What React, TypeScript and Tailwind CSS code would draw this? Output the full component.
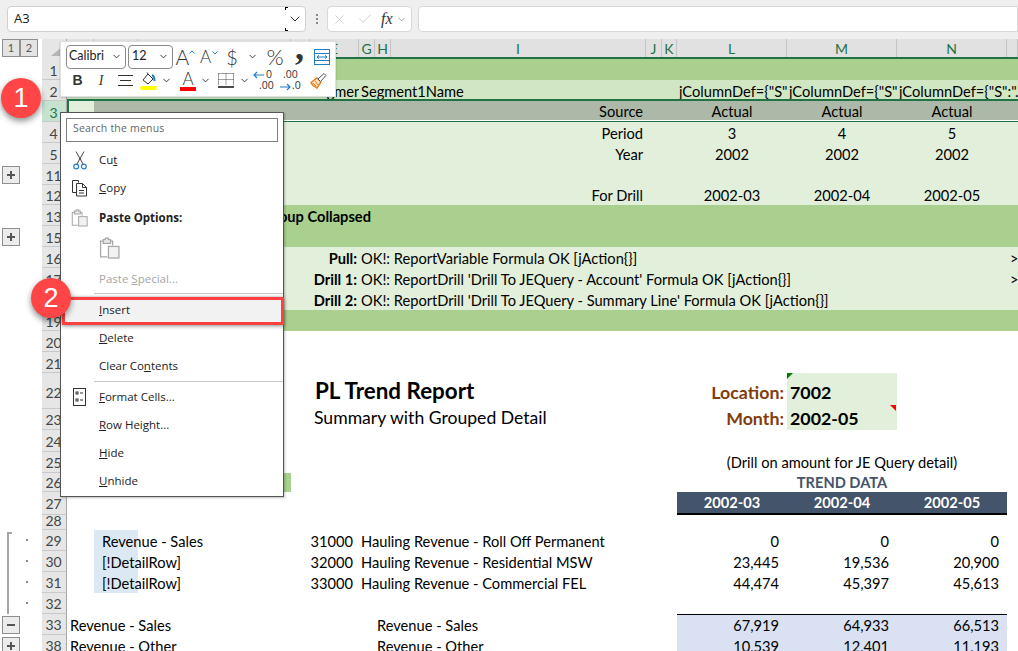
import React from "react";
import { ChevronDown, X, Check } from "lucide-react";

const gridCols =
  "grid grid-cols-[27px_44px_153px_19px_49px_16px_16px_255px_16px_15px_110px_110px_110px_11px] grid-rows-1 items-center h-full flex-1 min-w-0";

function OutlineBtn({ children }: { children: React.ReactNode }) {
  return (
    <div className="w-[18px] h-[18px] border border-[#8f8f8f] bg-[#ececec] flex items-center justify-center text-[#555] text-[13px] font-bold leading-none ml-[2px]">
      {children}
    </div>
  );
}

function PlusIcon() {
  return (
    <svg width="10" height="10" viewBox="0 0 10 10">
      <path d="M1 5h8M5 1v8" stroke="#555" strokeWidth="2" />
    </svg>
  );
}

function MinusIcon() {
  return (
    <svg width="10" height="10" viewBox="0 0 10 10">
      <path d="M1 5h8" stroke="#555" strokeWidth="2" />
    </svg>
  );
}

function Row({
  n,
  h,
  gutter,
  head,
  lh = "",
  children,
}: {
  n: string;
  h: string;
  gutter?: React.ReactNode;
  head?: string;
  lh?: string;
  children?: React.ReactNode;
}) {
  return (
    <div className={`flex relative ${h}`}>
      <div className="w-[42px] shrink-0 relative flex items-center">{gutter}</div>
      <div
        className={`w-[25px] shrink-0 border-b border-r border-b-[#c9c9c9] border-r-[#a8a8a8] flex items-center justify-center text-[14px] pr-[1px] ${lh} ${
          head ?? "bg-[#e6e6e6] text-[#444]"
        }`}
      >
        {n}
      </div>
      <div className={gridCols}>{children}</div>
    </div>
  );
}

function Dot() {
  return <div className="absolute left-[26px] top-[9px] w-[2px] h-[2px] bg-[#888]" />;
}

const fill = "row-start-1 h-full flex items-center whitespace-nowrap";
const low = "row-start-1 h-full flex items-center whitespace-nowrap pt-[2px]";

function MenuItem({ children, icon, h = "h-[28px]", cls = "" }: { children: React.ReactNode; icon?: React.ReactNode; h?: string; cls?: string }) {
  return (
    <div className={`flex items-center ${h} ${cls}`}>
      <div className="w-[38px] shrink-0 flex justify-center pr-[1px]">{icon}</div>
      <div className="whitespace-nowrap">{children}</div>
    </div>
  );
}

function ScissorsIcon() {
  return (
    <svg width="14" height="19" viewBox="0 0 14 19" fill="none">
      <path d="M3 0.5L10 13M11 0.5L4 13" stroke="#444" strokeWidth="1" />
      <circle cx="3.2" cy="15.5" r="2.4" stroke="#2b7cd3" strokeWidth="1.2" />
      <circle cx="10.8" cy="15.5" r="2.4" stroke="#2b7cd3" strokeWidth="1.2" />
    </svg>
  );
}

function CopyIcon() {
  return (
    <svg width="18" height="18" viewBox="0 0 18 18" fill="none" stroke="#333" strokeWidth="1">
      <path d="M7.5 3.5V1.5H1.5V13.5H5" />
      <path d="M5.5 4.5H11.5L15.5 8.5V17H5.5Z" fill="#fff" />
      <path d="M11.5 4.5V8.5H15.5M8 11.5h5M8 14h5" />
    </svg>
  );
}

function PasteIcon({ size = 18 }: { size?: number }) {
  return (
    <svg width={size} height={size * 1.05} viewBox="0 0 20 21" fill="none" stroke="#a8a8a8" strokeWidth="1.2">
      <path d="M8 19H1.5V4H13V8" />
      <path d="M4 4V2.5H6V1H9V2.5H11V6H4Z" fill="#e8e8e8" />
      <rect x="9" y="9" width="10" height="11" fill="#f2f2f2" />
    </svg>
  );
}

function FormatCellsIcon() {
  return (
    <svg width="13" height="18" viewBox="0 0 13 18" fill="none" stroke="#333" strokeWidth="1">
      <rect x="0.5" y="0.5" width="12" height="17" />
      <rect x="3" y="4" width="2" height="2" />
      <rect x="3" y="11" width="2" height="2" />
      <path d="M7 5h3M7 12h3" />
    </svg>
  );
}

function Caret({ className = "" }: { className?: string }) {
  return <ChevronDown size={11} strokeWidth={2} color="#333" className={className} />;
}

function Toolbar() {
  const btn = "flex items-center justify-center shrink-0 h-[24px]";
  return (
    <div className="absolute left-[60px] top-[41px] w-[276px] h-[56px] bg-white border border-[#e0e0e0] shadow-[0_1px_2px_rgba(0,0,0,0.2)] font-['Open_Sans',sans-serif] text-[#333] z-10">
      <div className="flex items-center pl-[5px] pt-[3px] h-[26px]">
        <div className="w-[60px] h-[24px] border border-[#8a8a8a] rounded-[4px] flex items-center justify-between pl-[2px] pr-[3px] text-[12.5px] font-['Lato',sans-serif] text-[#222]">
          Calibri
          <Caret />
        </div>
        <div className="w-[45px] h-[24px] border border-[#8a8a8a] rounded-[4px] ml-[2px] flex items-center justify-between pl-[3px] pr-[3px] text-[12.5px] font-['Lato',sans-serif] text-[#222]">
          12
          <Caret />
        </div>
        <div className={`${btn} w-[23px] text-[21px] font-light font-['Lato',sans-serif] relative pr-[4px]`}>
          A
          <svg width="6" height="4" viewBox="0 0 6 4" className="absolute right-[1px] top-[5px]">
            <path d="M0.5 3.5L3 1L5.5 3.5" stroke="#2a8fd8" fill="none" strokeWidth="1" />
          </svg>
        </div>
        <div className={`${btn} w-[24px] text-[17px] font-light font-['Lato',sans-serif] relative pr-[5px]`}>
          A
          <svg width="6" height="4" viewBox="0 0 6 4" className="absolute right-[2px] top-[6px]">
            <path d="M0.5 0.5L3 3L5.5 0.5" stroke="#2a8fd8" fill="none" strokeWidth="1" />
          </svg>
        </div>
        <div className={`${btn} w-[24px] text-[20px] font-light font-['Lato',sans-serif]`}>$</div>
        <div className={`${btn} w-[16px]`}>
          <Caret />
        </div>
        <div className={`${btn} w-[30px] text-[22px] font-light font-['Lato',sans-serif]`}>%</div>
        <div className={`${btn} w-[19px] text-[36px] font-bold font-['Liberation_Serif',serif] pb-[20px]`}>,</div>
        <div className={`${btn} w-[26px]`}>
          <svg width="16" height="16" viewBox="0 0 16 16" fill="none">
            <rect x="0.5" y="0.5" width="15" height="15" stroke="#1f7fc4" fill="#fff" />
            <path d="M0.5 4.5H15.5M0.5 11.5H15.5" stroke="#1f7fc4" />
            <path d="M3 8H13M3 8L5 6.3M3 8L5 9.7M13 8L11 6.3M13 8L11 9.7" stroke="#1f7fc4" />
          </svg>
        </div>
      </div>
      <div className="flex items-center pl-[5px] h-[24px]">
        <div className={`${btn} w-[23px] text-[14px] font-bold font-['Liberation_Sans',sans-serif]`}>B</div>
        <div className={`${btn} w-[24px] text-[14px] italic font-['Liberation_Serif',serif]`}>I</div>
        <div className={`${btn} w-[24px]`}>
          <svg width="15" height="13" viewBox="0 0 15 13" stroke="#333">
            <path d="M0 1.5H15M2 6.5H13M0 11.5H15" />
          </svg>
        </div>
        <div className={`${btn} w-[22px]`}>
          <svg width="17" height="19" viewBox="0 0 17 19" fill="none">
            <path d="M3 9L8 3L13 8L8 13Z" stroke="#333" fill="#fff" />
            <path d="M7 1.5L8 3" stroke="#333" />
            <path d="M12 4C14 5 14.5 8 14.5 10" stroke="#1f7fc4" strokeWidth="2" />
            <rect x="0.5" y="15" width="16" height="4" fill="#ffff00" />
          </svg>
        </div>
        <div className={`${btn} w-[14px]`}>
          <Caret />
        </div>
        <div className={`${btn} w-[20px] ml-[5px] flex-col relative`}>
          <span className="text-[17px] font-light font-['Lato',sans-serif] leading-[17px]">A</span>
          <div className="w-[16px] h-[4px] bg-[#ff0000]" />
        </div>
        <div className={`${btn} w-[14px]`}>
          <Caret />
        </div>
        <div className={`${btn} w-[24px] ml-[2px]`}>
          <svg width="16" height="17" viewBox="0 0 16 17" fill="none">
            <path d="M0.5 1.5H15.5M0.5 1.5V13M15.5 1.5V13M8 1.5V13M0.5 7.5H15.5" stroke="#444" strokeDasharray="1 1" />
            <path d="M0 15H16" stroke="#111" strokeWidth="1.5" />
          </svg>
        </div>
        <div className={`${btn} w-[12px]`}>
          <Caret />
        </div>
        <div className={`${btn} w-[30px] relative text-[10.5px] leading-[9px] font-['Open_Sans',sans-serif]`}>
          <svg width="11" height="8" viewBox="0 0 11 8" className="absolute left-[3px] top-[3px]" fill="none" stroke="#1f7fc4" strokeWidth="1.2">
            <path d="M11 4H1M4 1L1 4L4 7" />
          </svg>
          <span className="absolute left-[16px] top-[2px]">0</span>
          <span className="absolute left-[9px] top-[13px]">.00</span>
        </div>
        <div className={`${btn} w-[24px] relative text-[10.5px] leading-[9px] font-['Open_Sans',sans-serif]`}>
          <span className="absolute left-[3px] top-[2px]">.00</span>
          <svg width="11" height="8" viewBox="0 0 11 8" className="absolute left-[0px] top-[15px]" fill="none" stroke="#1f7fc4" strokeWidth="1.2">
            <path d="M0 4H10M7 1L10 4L7 7" />
          </svg>
          <span className="absolute left-[12px] top-[13px]">.0</span>
        </div>
        <div className={`${btn} w-[24px] ml-[2px]`}>
          <svg width="17" height="17" viewBox="0 0 17 17" fill="none">
            <path d="M7 6L11 10L7 16C5 15 2 13 1 10.5Z" fill="#fbe3c2" stroke="#e8811f" strokeWidth="1.4" />
            <path d="M3 11L6 14M5 9L8 13" stroke="#e8811f" />
            <path d="M8 7L14 1.5L16 3.5L10.5 9.5Z" fill="#fff" stroke="#555" />
          </svg>
        </div>
      </div>
    </div>
  );
}

function ContextMenu() {
  return (
    <div className="absolute left-[60px] top-[112px] w-[224px] h-[385px] bg-white border border-[#555] shadow-[1px_1px_2px_rgba(0,0,0,0.25)] z-10 font-['Open_Sans',sans-serif] text-[11.5px] text-[#222]">
      <div className="mx-[5px] mt-[5px] h-[24px] border border-[#808080] flex items-center pl-[6px] pb-[2px] text-[#666] text-[10.5px] tracking-[0.2px]">
        Search the menus
      </div>
      <div className="pt-[4px]">
        <MenuItem icon={<ScissorsIcon />}>
          Cu<u>t</u>
        </MenuItem>
        <MenuItem icon={<CopyIcon />}>
          <u>C</u>opy
        </MenuItem>
        <MenuItem cls="mt-[2px]" icon={<PasteIcon size={17} />}>
          <span className="font-bold">Paste Options:</span>
        </MenuItem>
        <div className="h-[33px] pl-[38px] flex items-center">
          <PasteIcon size={21} />
        </div>
        <MenuItem cls="text-[#a6a6a6]">
          Paste <u>S</u>pecial...
        </MenuItem>
        <div className="ml-[33px] h-[1px] bg-[#c8c8c8]" />
        <MenuItem cls="bg-[#f2f2f2] mt-[2px]">
          <u>I</u>nsert
        </MenuItem>
        <MenuItem>
          <u>D</u>elete
        </MenuItem>
        <MenuItem>
          Clear Co<u>n</u>tents
        </MenuItem>
        <div className="ml-[33px] h-[1px] bg-[#c8c8c8] mt-[1px] mb-[1px]" />
        <MenuItem icon={<FormatCellsIcon />}>
          <u>F</u>ormat Cells...
        </MenuItem>
        <MenuItem>
          <u>R</u>ow Height...
        </MenuItem>
        <MenuItem>
          <u>H</u>ide
        </MenuItem>
        <MenuItem>
          <u>U</u>nhide
        </MenuItem>
      </div>
    </div>
  );
}

function Badge({ pos, children }: { pos: string; children: React.ReactNode }) {
  return (
    <div
      className={`absolute ${pos} w-[40px] h-[40px] rounded-full bg-[#ff4545] text-white text-[27px] font-['Liberation_Sans',sans-serif] flex items-center justify-center shadow-[0_3px_6px_rgba(0,0,0,0.45)] z-30`}
    >
      {children}
    </div>
  );
}

const headers: [string, string][] = [
  ["A", "col-[1/2]"],
  ["B", "col-[2/3]"],
  ["C", "col-[3/4]"],
  ["D", "col-[4/5]"],
  ["E", "col-[5/6]"],
  ["G", "col-[6/7]"],
  ["H", "col-[7/8]"],
  ["I", "col-[8/9]"],
  ["J", "col-[9/10]"],
  ["K", "col-[10/11]"],
  ["L", "col-[11/12]"],
  ["M", "col-[12/13]"],
  ["N", "col-[13/14]"],
  ["", "col-[14/15]"],
];

function Amounts({ a, b, c }: { a: string; b: string; c: string }) {
  return (
    <>
      <div className={`${low} col-[11/12] justify-end pr-[8px]`}>{a}</div>
      <div className={`${low} col-[12/13] justify-end pr-[8px]`}>{b}</div>
      <div className={`${low} col-[13/14] justify-end pr-[8px]`}>{c}</div>
    </>
  );
}

function Three({ a, b, c, cls = "" }: { a: string; b: string; c: string; cls?: string }) {
  return (
    <>
      <div className={`${fill} col-[11/12] justify-center ${cls}`}>{a}</div>
      <div className={`${fill} col-[12/13] justify-center ${cls}`}>{b}</div>
      <div className={`${fill} col-[13/14] justify-center ${cls}`}>{c}</div>
    </>
  );
}

export default function App() {
  return (
    <div className="w-[1018px] h-[651px] relative overflow-hidden bg-white font-['Lato',sans-serif] text-[14.65px] text-black">
      {/* formula bar */}
      <div className="h-[39px] bg-[#efefef] flex items-center pl-[7px] pb-[1px]">
        <div className="w-[299px] h-[26px] bg-white border border-[#d0d0d0] rounded-[4px] flex items-center justify-between pl-[6px] text-[13px] text-[#222] font-['Open_Sans',sans-serif]">
          A3
          <div className="w-[20px] h-full flex items-center justify-center relative">
            <ChevronDown size={16} strokeWidth={1.5} color="#333" />
            <div className="absolute left-0 top-0 w-[3px] h-[3px] border-t border-l border-black" />
            <div className="absolute left-0 bottom-0 w-[3px] h-[3px] border-b border-l border-black" />
          </div>
        </div>
        <div className="w-[21px] flex flex-col items-center gap-[2px]">
          <div className="w-[2px] h-[2px] bg-[#888]" />
          <div className="w-[2px] h-[2px] bg-[#888]" />
          <div className="w-[2px] h-[2px] bg-[#888]" />
        </div>
        <div className="w-[85px] h-[26px] bg-white border border-[#d8d8d8] rounded-[4px] flex items-center pl-[4px]">
          <X size={15} strokeWidth={1.2} color="#bdbdbd" />
          <Check size={16} strokeWidth={1.2} color="#bdbdbd" className="ml-[10px]" />
          <span className="ml-[8px] text-[16px] italic font-['Liberation_Serif',serif] text-[#333]">fx</span>
          <ChevronDown size={11} strokeWidth={1.2} color="#555" className="ml-[3px]" />
        </div>
        <div className="ml-[6px] flex-1 h-[26px] bg-white border border-[#d8d8d8] rounded-l-[4px]" />
      </div>

      {/* column headers */}
      <div className="flex h-[20px]">
        <div className="w-[42px] shrink-0 flex items-start">
          <div className="w-[18px] h-[18px] border border-[#8f8f8f] bg-[#e4e4e4] ml-[2px] flex items-center justify-center text-[11px] text-[#555]">1</div>
          <div className="w-[18px] h-[18px] border border-[#8f8f8f] bg-[#e4e4e4] flex items-center justify-center text-[11px] text-[#555]">2</div>
        </div>
        <div className="w-[25px] shrink-0 bg-[#e6e6e6] border-r border-[#a8a8a8] relative">
          <svg width="12" height="10" viewBox="0 0 12 10" className="absolute left-[9px] top-[7px]">
            <path d="M12 0V10H0Z" fill="#b5b5b5" />
          </svg>
        </div>
        <div className={`${gridCols} bg-[#e1e1e1] border-b-2 border-[#217346]`}>
          {headers.map(([t, c]) => (
            <div key={c} className={`${c} row-start-1 h-full flex items-center justify-center border-r border-[#c4c4c4] text-[#217346] text-[14px]`}>
              {t}
            </div>
          ))}
        </div>
      </div>

      <Row n="1" h="h-[21px]" lh="pt-[2px]">
        <div className="col-[1/15] row-start-1 h-full bg-[#a9d08e]" />
      </Row>
      <Row n="2" h="h-[21px]" lh="pt-[2px]">
        <div className="col-[1/15] row-start-1 h-full bg-[#d1e6c3]" />
        <div className={`${low} col-[5/6] overflow-hidden pl-[1px]`}>Segment1Name</div>
        <div className={`${low} col-[6/9] pl-[2px]`}>Segment1Name</div>
        <div className={`${low} col-[11/12] overflow-hidden pl-[2px]`}>jColumnDef={'{"S":"'}</div>
        <div className={`${low} col-[12/13] overflow-hidden pl-[2px]`}>jColumnDef={'{"S":"'}</div>
        <div className={`${low} col-[13/15] overflow-hidden pl-[2px]`}>jColumnDef={'{"S":".'}</div>
      </Row>
      <Row n="3" h="h-[21px]" lh="pt-[2px]" head="bg-[#c5e3cf] text-[#217346]">
        <div className="col-[1/2] row-start-1 h-full bg-[#e2efda]" />
        <div className="col-[2/15] row-start-1 h-full bg-[#adb9a8]" />
        <div className={`${fill} col-[8/9] justify-end pr-[3px]`}>Source</div>
        <Three a="Actual" b="Actual" c="Actual" />
        <div className="absolute left-[67px] right-0 top-[-2px] bottom-[-1px] border-y-2 border-l-2 border-[#217346] pointer-events-none">
          <div className="absolute left-0 right-0 bottom-0 h-[1px] bg-white" />
        </div>
      </Row>
      <Row n="4" h="h-[21px]" lh="pt-[2px]">
        <div className="col-[1/15] row-start-1 h-full bg-[#e2efda]" />
        <div className={`${low} col-[8/9] justify-end pr-[3px]`}>Period</div>
        <Three a="3" b="4" c="5" cls="pt-[2px]" />
      </Row>
      <Row n="5" h="h-[21px]" lh="pt-[2px]">
        <div className="col-[1/15] row-start-1 h-full bg-[#e2efda]" />
        <div className={`${low} col-[8/9] justify-end pr-[3px]`}>Year</div>
        <Three a="2002" b="2002" c="2002" cls="pt-[2px]" />
      </Row>
      <Row n="11" h="h-[21px]" lh="pt-[2px]" gutter={<OutlineBtn><PlusIcon /></OutlineBtn>}>
        <div className="col-[1/15] row-start-1 h-full bg-[#e2efda]" />
      </Row>
      <Row n="12" h="h-[20px]" lh="pt-[2px]">
        <div className="col-[1/15] row-start-1 h-full bg-[#e2efda]" />
        <div className={`${low} col-[8/9] justify-end pr-[3px]`}>For Drill</div>
        <Three a="2002-03" b="2002-04" c="2002-05" cls="pt-[2px]" />
      </Row>
      <Row n="13" h="h-[21px]" lh="pt-[3px]">
        <div className="col-[1/15] row-start-1 h-full bg-[#a9d08e]" />
        <div className={`${fill} col-[1/8] justify-end pr-[20px] pt-[3px] font-bold`}>Detail Group Collapsed</div>
      </Row>
      <Row n="15" h="h-[21px]" lh="pt-[3px]" gutter={<OutlineBtn><PlusIcon /></OutlineBtn>}>
        <div className="col-[1/15] row-start-1 h-full bg-[#a9d08e]" />
      </Row>
      <Row n="16" h="h-[21px]" lh="pt-[3px]">
        <div className="col-[1/15] row-start-1 h-full bg-[#e2efda]" />
        <div className={`${fill} col-[4/6] justify-end pr-[2px] pt-[3px] font-bold`}>Pull:</div>
        <div className={`${fill} col-[6/9] pl-[2px] pt-[3px]`}>OK!: ReportVariable Formula OK [jAction{"{}"}]</div>
        <div className={`${fill} col-[14/15] pl-[3px] pt-[3px]`}>&gt;</div>
      </Row>
      <Row n="17" h="h-[21px]" lh="pt-[3px]">
        <div className="col-[1/15] row-start-1 h-full bg-[#e2efda]" />
        <div className={`${fill} col-[4/6] justify-end pr-[2px] pt-[3px] font-bold`}>Drill 1:</div>
        <div className={`${fill} col-[6/9] pl-[2px] pt-[3px]`}>OK!: ReportDrill 'Drill To JEQuery - Account' Formula OK [jAction{"{}"}]</div>
        <div className={`${fill} col-[14/15] pl-[3px] pt-[3px]`}>&gt;</div>
      </Row>
      <Row n="18" h="h-[21px]" lh="pt-[3px]">
        <div className="col-[1/15] row-start-1 h-full bg-[#e2efda]" />
        <div className={`${fill} col-[4/6] justify-end pr-[2px] pt-[3px] font-bold`}>Drill 2:</div>
        <div className={`${fill} col-[6/9] pl-[2px] pt-[3px]`}>OK!: ReportDrill 'Drill To JEQuery - Summary Line' Formula OK [jAction{"{}"}]</div>
      </Row>
      <Row n="19" h="h-[21px]" lh="pt-[3px]">
        <div className="col-[1/15] row-start-1 h-full bg-[#a9d08e]" />
      </Row>
      <Row n="20" h="h-[21px]" lh="pt-[3px]" />
      <Row n="21" h="h-[21px]" lh="pt-[3px]" />
      <Row n="22" h="h-[36px]" lh="pt-[4px]">
        <div className={`${fill} col-[4/9] pl-[24px] text-[22.4px] font-bold`}>PL Trend Report</div>
        <div className={`${fill} col-[11/12] justify-end pr-[3px] pt-[2px] text-[17.8px] font-bold text-[#833c0b]`}>Location:</div>
        <div className={`${fill} col-[12/13] relative pl-[3px] pt-[2px] text-[17.8px] font-bold bg-[#e2efda]`}>
          7002
          <div className="absolute left-0 top-0 w-0 h-0 border-t-[6px] border-r-[6px] border-t-[#008000] border-r-transparent" />
        </div>
      </Row>
      <Row n="23" h="h-[21px]">
        <div className={`${fill} col-[4/9] pl-[23px] pb-[3px] text-[17.6px]`}>Summary with Grouped Detail</div>
        <div className={`${fill} col-[11/12] justify-end pr-[3px] pb-[3px] text-[17.8px] font-bold text-[#833c0b]`}>Month:</div>
        <div className={`${fill} col-[12/13] relative pl-[3px] pb-[3px] text-[17.8px] font-bold bg-[#e2efda]`}>
          2002-05
          <div className="absolute right-[1px] top-[-4px] w-0 h-0 border-t-[6px] border-l-[6px] border-t-[#ff0000] border-l-transparent" />
        </div>
      </Row>
      <Row n="24" h="h-[22px]" lh="pt-[2px]" />
      <Row n="25" h="h-[21px]">
        <div className={`${fill} col-[11/14] justify-center`}>(Drill on amount for JE Query detail)</div>
      </Row>
      <Row n="26" h="h-[19px]">
        <div className="col-[1/4] row-start-1 h-full bg-[#a9d08e]" />
        <div className={`${fill} col-[11/14] justify-center font-bold text-[#44546a]`}>TREND DATA</div>
      </Row>
      <Row n="27" h="h-[23px]">
        <Three a="2002-03" b="2002-04" c="2002-05" cls="bg-[#44546a] text-white font-bold border-b-2 border-black" />
      </Row>
      <Row n="28" h="h-[15px]" lh="pb-[4px]" />
      <Row
        n="29"
        h="h-[21px]"
        gutter={
          <>
            <div className="absolute left-[7px] top-[2px] bottom-0 w-[5px] border-l-2 border-t-2 border-[#a6a6a6]" />
            <Dot />
          </>
        }
      >
        <div className="col-[2/3] row-start-1 h-full bg-[#dce9f5]" />
        <div className={`${low} col-[2/4] pl-[8px]`}>Revenue - Sales</div>
        <div className={`${low} col-[4/6] justify-end pr-[6px]`}>31000</div>
        <div className={`${low} col-[6/9] pl-[2px]`}>Hauling Revenue - Roll Off Permanent</div>
        <Amounts a="0" b="0" c="0" />
      </Row>
      <Row
        n="30"
        h="h-[21px]"
        gutter={
          <>
            <div className="absolute left-[7px] top-0 bottom-0 border-l-2 border-[#a6a6a6]" />
            <Dot />
          </>
        }
      >
        <div className="col-[2/3] row-start-1 h-full bg-[#dce9f5]" />
        <div className={`${low} col-[2/4] pl-[8px]`}>[!DetailRow]</div>
        <div className={`${low} col-[4/6] justify-end pr-[6px]`}>32000</div>
        <div className={`${low} col-[6/9] pl-[2px]`}>Hauling Revenue - Residential MSW</div>
        <Amounts a="23,445" b="19,536" c="20,900" />
      </Row>
      <Row
        n="31"
        h="h-[21px]"
        gutter={
          <>
            <div className="absolute left-[7px] top-0 bottom-0 border-l-2 border-[#a6a6a6]" />
            <Dot />
          </>
        }
      >
        <div className="col-[2/3] row-start-1 h-full bg-[#dce9f5]" />
        <div className={`${low} col-[2/4] pl-[8px]`}>[!DetailRow]</div>
        <div className={`${low} col-[4/6] justify-end pr-[6px]`}>33000</div>
        <div className={`${low} col-[6/9] pl-[2px]`}>Hauling Revenue - Commercial FEL</div>
        <Amounts a="44,474" b="45,397" c="45,613" />
      </Row>
      <Row
        n="32"
        h="h-[21px]"
        gutter={
          <>
            <div className="absolute left-[7px] top-0 bottom-0 border-l-2 border-[#a6a6a6]" />
            <Dot />
          </>
        }
      />
      <Row n="33" h="h-[21px]" gutter={<OutlineBtn><MinusIcon /></OutlineBtn>}>
        <div className="col-[11/14] row-start-1 h-full bg-[#d9e1f2] border-t border-black" />
        <div className={`${low} col-[1/4] pl-[3px]`}>Revenue - Sales</div>
        <div className={`${low} col-[7/9] pl-[2px]`}>Revenue - Sales</div>
        <Amounts a="67,919" b="64,933" c="66,513" />
      </Row>
      <Row n="38" h="h-[21px]" gutter={<OutlineBtn><PlusIcon /></OutlineBtn>}>
        <div className="col-[11/14] row-start-1 h-full bg-[#d9e1f2]" />
        <div className={`${low} col-[1/4] pl-[3px]`}>Revenue - Other</div>
        <div className={`${low} col-[7/9] pl-[2px]`}>Revenue - Other</div>
        <Amounts a="10,539" b="12,401" c="11,193" />
      </Row>

      <Toolbar />
      <ContextMenu />
      <div className="absolute left-[62px] top-[297px] w-[222px] h-[28px] border-[3px] border-[#ff4040] shadow-[0_1px_4px_rgba(0,0,0,0.45)] z-20" />
      <Badge pos="left-[1px] top-[78px]">1</Badge>
      <Badge pos="left-[31px] top-[278px]">2</Badge>
    </div>
  );
}
